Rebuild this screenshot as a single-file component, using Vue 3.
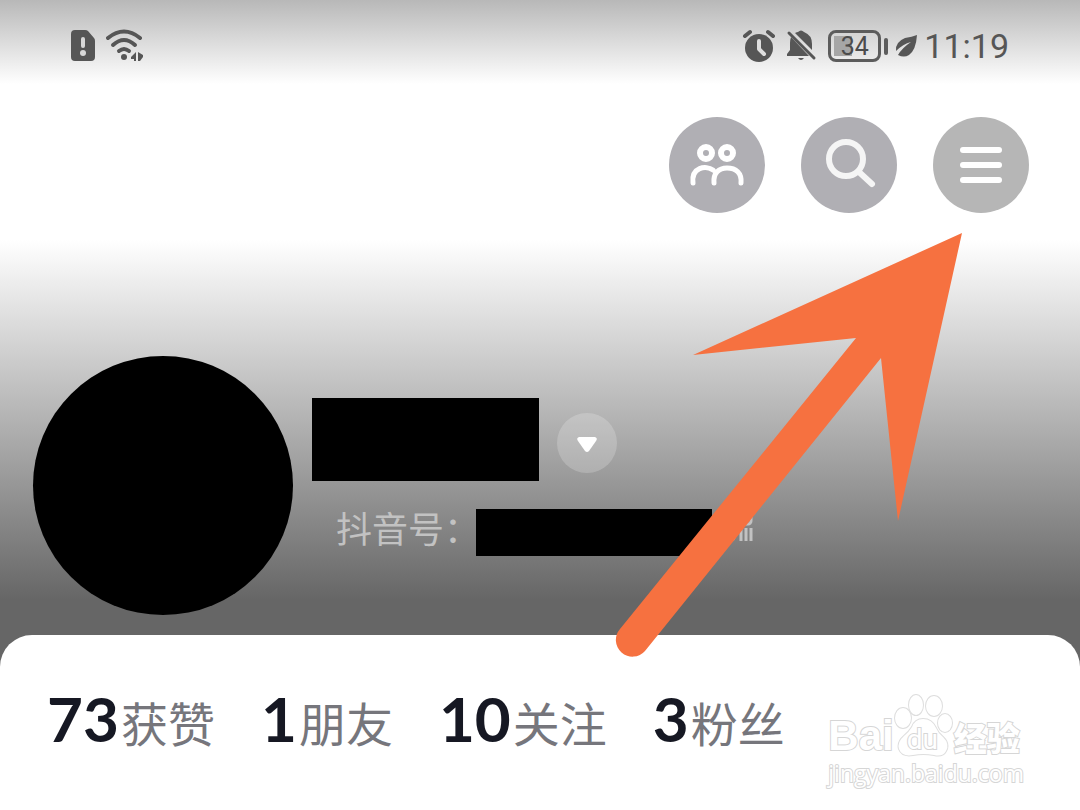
<script setup>
const stats = [
  { value: '73', label: '获赞' },
  { value: '1', label: '朋友' },
  { value: '10', label: '关注' },
  { value: '3', label: '粉丝' },
]
</script>

<template>
  <div class="page">
    <header class="status">
      <div class="status-side">
        <svg class="sim" width="26" height="34" viewBox="0 0 26 34" aria-hidden="true">
          <path fill="#565656" d="M5 1H15Q17 1 18 2L24 9Q25 10 25 12V28Q25 32 21 32H5Q1 32 1 28V5Q1 1 5 1Z" />
          <path d="M13 10V17" stroke="#d8d8d8" stroke-width="4" stroke-linecap="round" />
          <circle cx="13" cy="24" r="3" fill="#d8d8d8" />
        </svg>
        <svg width="40" height="34" viewBox="0 0 40 34" aria-hidden="true">
          <g fill="none" stroke="#565656" stroke-width="4" stroke-linecap="round">
            <path d="M2 9Q18 -4 34 9" />
            <path d="M7 16Q18 6 29 16" />
            <path d="M13 22Q18 18 23 22" />
          </g>
          <circle cx="18" cy="28" r="3" fill="#565656" />
          <path fill="#565656" d="M30 23V32H28V30H25V28L30 23ZM32 23L37 26V28L34 32H32Z" />
        </svg>
      </div>
      <div class="status-side">
        <svg class="alarm" width="34" height="34" viewBox="0 0 34 34" aria-hidden="true">
          <circle cx="17" cy="19" r="14" fill="#565656" />
          <path d="M3 7L8 3M26 3L31 7" fill="none" stroke="#565656" stroke-width="4" stroke-linecap="round" />
          <path d="M17 12V20L22 25" fill="none" stroke="#dedede" stroke-width="4" stroke-linecap="round" stroke-linejoin="round" />
        </svg>
        <svg class="bell" width="32" height="34" viewBox="0 0 32 34" aria-hidden="true">
          <path fill="#565656" d="M9 4Q11 3 12 3Q15 0 18 3Q26 6 26 15V21ZM5 8L23 27H1V25L4 21V14Q4 11 5 8Z" />
          <path d="M3 4L28 29" stroke="#565656" stroke-width="3" stroke-linecap="round" />
          <path fill="#565656" d="M12 29H18Q15 33 12 29Z" />
        </svg>
        <div class="battery"><span>34</span></div>
        <i class="battery-cap"></i>
        <svg class="leaf" width="24" height="26" viewBox="0 0 24 26" aria-hidden="true">
          <path fill="#565656" d="M23 2Q18 4 11 5Q1 9 2 18Q9 11 17 9Q8 15 4 22Q10 25 15 22Q22 17 23 2Z" />
        </svg>
        <time class="clock">11:19</time>
      </div>
    </header>

    <nav class="actions" aria-label="工具">
      <button class="round" type="button" aria-label="朋友">
        <svg width="96" height="96" viewBox="0 0 96 96" fill="none" stroke="#fff" stroke-linecap="round">
          <g stroke-width="6">
            <circle cx="37" cy="36" r="6" />
            <circle cx="58" cy="36" r="6" />
          </g>
          <path stroke-width="5" d="M24 66C22 50 37 48 44 53M45 66C44 56 50 51 58 51C67 51 73 56 72 66" />
        </svg>
      </button>
      <button class="round" type="button" aria-label="搜索">
        <svg width="96" height="96" viewBox="0 0 96 96" fill="none" stroke="#f5f5f5" stroke-linecap="round">
          <circle cx="45" cy="42" r="17" stroke-width="6" />
          <path d="M58 55L71 67" stroke-width="6" />
        </svg>
      </button>
      <button class="round menu" type="button" aria-label="菜单">
        <svg width="96" height="96" viewBox="0 0 96 96" fill="none" stroke="#fff" stroke-width="6" stroke-linecap="round">
          <path d="M30 33H66M30 48H66M30 63H66" />
        </svg>
      </button>
    </nav>

    <section class="profile">
      <div class="avatar"></div>
      <div class="details">
        <div class="name-row">
          <div class="name"></div>
          <button class="toggle" type="button" aria-label="展开">
            <svg width="22" height="20" viewBox="0 -4 22 20" aria-hidden="true">
              <path fill="#fff" d="M3 0H19Q22 1 20 4L13 14Q11 16 9 14L2 4Q0 1 3 0Z" />
            </svg>
          </button>
        </div>
        <div class="id-row">
          <span class="id-label">抖音号：</span>
          <div class="id"></div>
          <svg class="qr" width="32" height="34" viewBox="0 0 32 34" fill="none" stroke="#c2c2c2" stroke-width="3" aria-hidden="true">
            <rect x="2" y="4" width="11" height="11" rx="3" />
            <rect x="19" y="4" width="11" height="11" rx="3" />
            <rect x="2" y="20" width="11" height="11" rx="3" />
            <path d="M20 19V32M25 19V32M30 19V32" />
          </svg>
        </div>
      </div>
    </section>

    <main class="card">
      <ul class="stats">
        <li v-for="s in stats" :key="s.label">
          <strong>{{ s.value }}</strong><span>{{ s.label }}</span>
        </li>
      </ul>
      <div class="mark">
        <div class="mark-brand">
          <span class="bai">Bai</span>
          <span class="paw">
            <svg width="60" height="64" viewBox="0 0 60 64" fill="#fff" stroke="#dedede" stroke-width="2" aria-hidden="true">
              <ellipse cx="9" cy="24" rx="8" ry="10" />
              <ellipse cx="22" cy="11" rx="7" ry="10" />
              <ellipse cx="40" cy="12" rx="8" ry="10" />
              <ellipse cx="51" cy="29" rx="7" ry="9" />
              <path d="M29 25Q38 25 42 34Q44 39 49 43Q56 50 52 57Q49 63 40 61Q29 59 19 61Q8 63 5 55Q3 48 10 42Q15 38 18 33Q21 25 29 25Z" />
            </svg>
            <span class="du">du</span>
          </span>
          <span class="jy">经验</span>
        </div>
        <div class="mark-url">jingyan.baidu.com</div>
      </div>
    </main>

    <svg class="arrow" width="360" height="440" viewBox="0 0 360 440" aria-hidden="true">
      <path fill="#f67140" d="M352 13L83 135L246 118L10 409A16 16 0 0 0 35 431L271 138L288 301Z" />
    </svg>
  </div>
</template>

<style>
body {
  margin: 0;
}
</style>

<style scoped>
.page {
  position: relative;
  box-sizing: border-box;
  min-height: 100vh;
  overflow: hidden;
  display: flex;
  flex-direction: column;
  font-family: Roboto, "Noto Sans CJK SC", sans-serif;
  background: linear-gradient(#b8b8b8 0, #fff 84px, #fff 240px, #666 600px);
}

.status {
  display: flex;
  justify-content: space-between;
  align-items: center;
  height: 40px;
  padding: 26px 71px 0 70px;
}

.status-side {
  display: flex;
  align-items: center;
}

.sim {
  margin-right: 10px;
}

.alarm {
  margin-right: 10px;
}

.bell {
  margin-right: 10px;
}

.battery {
  box-sizing: border-box;
  width: 53px;
  height: 32px;
  border: 3px solid #5c5c5c;
  border-radius: 8px;
  padding: 2px 3px;
  background: linear-gradient(90deg, #a6a6a6 18px, transparent 18px) 3px 3px / 41px 20px no-repeat;
  color: #4c4c4c;
  font-size: 25px;
  line-height: 24px;
  text-align: center;
}

.battery-cap {
  width: 4px;
  height: 17px;
  margin: 0 6px 0 3px;
  border-radius: 2px;
  background: #5c5c5c;
}

.leaf {
  margin-right: 6px;
}

.clock {
  color: #565656;
  font-size: 34px;
  line-height: 42px;
}

.actions {
  display: flex;
  justify-content: flex-end;
  gap: 36px;
  padding: 51px 51px 0;
}

.round {
  width: 96px;
  height: 96px;
  padding: 0;
  border: 0;
  border-radius: 50%;
  background: #b0afb4;
}

.round svg {
  display: block;
}

.menu {
  background: #b6b6b6;
}

.profile {
  display: flex;
  gap: 19px;
  padding: 143px 33px 20px;
}

.avatar {
  width: 260px;
  height: 259px;
  border-radius: 50%;
  background: #000;
}

.details {
  padding-top: 42px;
}

.name-row {
  display: flex;
  align-items: center;
  gap: 18px;
}

.name {
  width: 227px;
  height: 83px;
  background: #000;
}

.toggle {
  display: flex;
  align-items: center;
  justify-content: center;
  width: 60px;
  height: 60px;
  margin-top: 7px;
  padding: 0;
  border: 0;
  border-radius: 50%;
  background: rgba(255, 255, 255, 0.2);
}

.id-row {
  display: flex;
  align-items: flex-start;
  margin-top: 28px;
  padding-left: 24px;
}

.id-label {
  width: 140px;
  color: #c2c2c2;
  font-size: 36px;
  line-height: 44px;
  white-space: nowrap;
}

.id {
  width: 236px;
  height: 47px;
  background: #000;
}

.qr {
  margin-left: 9px;
}

.card {
  flex: 1;
  display: flex;
  justify-content: space-between;
  align-items: flex-start;
  padding: 0 56px 0 47px;
  border-radius: 32px 32px 0 0;
  background: #fff;
}

.stats {
  display: flex;
  gap: 46px;
  margin: 0;
  padding: 47px 0 0;
  list-style: none;
}

.stats li {
  display: flex;
  align-items: baseline;
  gap: 2px;
  white-space: nowrap;
}

.stats strong {
  color: #161823;
  font-family: Lato, sans-serif;
  font-size: 62px;
  font-weight: 700;
  line-height: 72px;
}

.stats span {
  color: #76767c;
  font-size: 47px;
  line-height: 72px;
}

.mark {
  padding-top: 59px;
  color: #fff;
  -webkit-text-stroke: 2px #d6d6d6;
  paint-order: stroke fill;
}

.mark-brand {
  display: flex;
  align-items: flex-end;
  height: 64px;
}

.bai {
  font-family: "Liberation Sans", sans-serif;
  font-size: 42px;
  font-weight: 700;
  line-height: 44px;
}

.paw {
  position: relative;
  width: 60px;
  height: 64px;
}

.du {
  position: absolute;
  left: 13px;
  bottom: 2px;
  font-size: 28px;
  line-height: 32px;
}

.jy {
  font-size: 33px;
  font-weight: 900;
  line-height: 36px;
}

.mark-url {
  font-family: "Open Sans", sans-serif;
  font-size: 23px;
  line-height: 30px;
}

.arrow {
  position: absolute;
  top: 220px;
  right: 110px;
}
</style>
